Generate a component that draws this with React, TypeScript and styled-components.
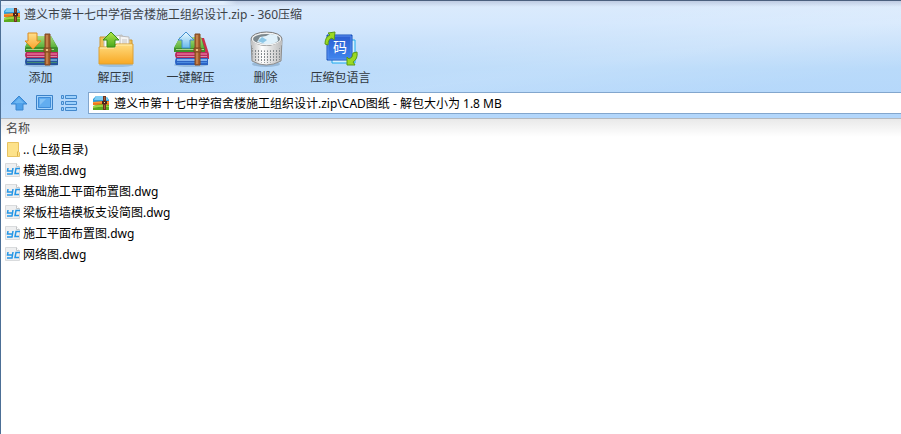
import React from "react";
import styled, { createGlobalStyle } from "styled-components";

const Global = createGlobalStyle`
  * { box-sizing: border-box; }
  body { margin: 0; background: #fff; }
  body, button, input, table {
    font-family: "Noto Sans", "Noto Sans CJK SC", sans-serif;
    font-size: 12px;
    line-height: 18px;
    color: #000;
  }
  svg { display: block; flex: none; }
`;

const Window = styled.div`
  min-height: 100vh;
  border-left: 1px solid #4c6f96;
  background: #fff;
  overflow: hidden;
`;

const Header = styled.header`
  border-top: 1px solid #4b607e;
  border-bottom: 1px solid #b4b9bf;
  background:
    linear-gradient(90deg, rgba(226, 238, 252, 1) 222px, rgba(226, 238, 252, 0) 236px) left top / 100% 4px no-repeat,
    linear-gradient(rgba(170, 182, 208, 0.6), rgba(190, 208, 235, 0)) left top / 100% 6px no-repeat,
    linear-gradient(172deg, rgba(255, 255, 255, 0) 40%, rgba(255, 255, 255, 0.12) 60%, rgba(255, 255, 255, 0) 80%),
    linear-gradient(#dcebfc 0, #d5e8fd 22px, #c8e1fb 44px, #b9dafa 68px, #b2d6fb 100%);
`;

const TitleBar = styled.div`
  display: flex;
  align-items: center;
  gap: 3px;
  height: 26px;
  padding: 1px 0 0 3px;
`;

const Title = styled.h1`
  margin: 0;
  font-size: 12px;
  font-weight: 400;
  color: #3c4248;
`;

const Toolbar = styled.nav`
  display: flex;
  height: 62px;
  padding-left: 2px;
`;

const ToolButton = styled.button`
  display: flex;
  flex-direction: column;
  align-items: center;
  width: 75px;
  padding: 2px 0 0;
  border: 0;
  background: none;
  color: #303840;
`;

const AddressRow = styled.div`
  display: flex;
  align-items: center;
  padding: 3px 0 4px 9px;
`;

const NavButton = styled.button`
  width: 25px;
  padding: 0;
  border: 0;
  background: none;
`;

const AddressBox = styled.label`
  display: flex;
  flex: 1;
  align-items: center;
  gap: 3px;
  height: 22px;
  margin-left: 3px;
  padding-left: 4px;
  border: 1px solid #82a6cd;
  border-right: 0;
  background: #fff;
`;

const AddressInput = styled.input`
  flex: 1;
  min-width: 0;
  padding: 2px 0 0 1px;
  border: 0;
  outline: 0;
  background: none;
`;

const FileArea = styled.main`
  background: linear-gradient(#e9e9e9, #fff 18px);
`;

const FileTable = styled.table`
  width: 100%;
  border-collapse: collapse;
`;

const NameHeading = styled.th`
  height: 20px;
  padding: 0 0 0 5px;
  font-weight: 400;
  text-align: left;
  color: #484848;
`;

const NameCell = styled.td`
  height: 21px;
  padding: 0 0 0 4px;
`;

const FileName = styled.div`
  display: flex;
  align-items: center;
  gap: 2px;
`;

function ArchiveIcon() {
  return (
    <svg width="17" height="16" viewBox="0 0 17 16" aria-hidden="true">
      <path d="M3 1h6l1 1h4l2 3v2H0V4z" fill="#2f9fdd" />
      <path d="M3 1h6l1 1h4l1 3H1z" fill="#7fcdf3" />
      <path d="M0 7l10-1h6v4H0z" fill="#f27a1c" />
      <path d="M0 7h16v1H0z" fill="#fb9c38" />
      <path d="M0 11q7-3 16-1v5H0z" fill="#5cab1e" />
      <path d="M0 11q7-2 16 0v1q-8-1-16 1z" fill="#a2d645" />
      <path d="M10 1h3v14h-3z" fill="#6e3520" />
      <path d="M9 6h5v3H9z" fill="#4a251c" />
      <path d="M11 2h1v3h-1zM11 10h1v4h-1z" fill="#a85e38" />
      <path d="M11 7h1v1h-1z" fill="#f9d779" />
    </svg>
  );
}

function Books({ lifted }: { lifted?: boolean }) {
  return (
    <>
      <path d="M5 29h32v7H5q-2-3 0-7z" fill={lifted ? "#2a63c4" : "#27539b"} />
      <path d="M6 30h30v2H6z" fill={lifted ? "#7fb0ee" : "#6d9bd0"} />
      <path d="M6 33h30v1H6z" fill={lifted ? "#4a8be0" : "#3f8a76"} />
      <path d="M5 23h32v6H5q-2-3 0-6z" fill="#b52c5d" />
      <path d="M6 24h30v2H6z" fill="#dc5b88" />
      <path d="M6 27h30v1H6z" fill="#d88ba8" />
      <path d={lifted ? "M9 8h21l4 12v3H3v-4z" : "M9 7h21l7 12v4H4v-4z"} fill="#3f8f2b" />
      <path d={lifted ? "M9 8h21l3 11H3z" : "M9 7h21l6 11H4z"} fill="url(#cover)" />
      <path d="M5 20h28v1H5z" fill="#a9d58a" />
    </>
  );
}

function Strap() {
  return (
    <>
      <path d="M24 5h5v31h-5z" fill="#a9602c" stroke="#804a22" />
      <path d="M26 6v29" stroke="#dda068" />
      <path d="M23 19h7v4h-7z" fill="#a0602e" stroke="#7c4820" />
      <path d="M26 20v2" stroke="#f0bf82" strokeWidth="2" />
    </>
  );
}

function AddIcon() {
  return (
    <svg width="40" height="40" viewBox="0 0 40 40" aria-hidden="true">
      <defs>
        <linearGradient id="cover" x2="0" y2="1"><stop stopColor="#a9db7c" /><stop offset="1" stopColor="#5cb13b" /></linearGradient>
        <linearGradient id="orange" x2="0" y2="1"><stop stopColor="#ffe08c" /><stop offset="1" stopColor="#f8a42c" /></linearGradient>
      </defs>
      <ellipse cx="20" cy="36" rx="17" ry="2" fill="#5481a7" opacity=".35" />
      <Books /><Strap />
      <path d="M7 4h9v8h4l-8 8-8-8h3z" fill="url(#orange)" stroke="#dc8a1f" />
    </svg>
  );
}

function ExtractIcon() {
  return (
    <svg width="40" height="40" viewBox="0 0 40 40" aria-hidden="true">
      <defs>
        <linearGradient id="folder" x2="0" y2="1"><stop stopColor="#ffdc80" /><stop offset="1" stopColor="#f8a823" /></linearGradient>
        <linearGradient id="lime" x2="0" y2="1"><stop stopColor="#b5e848" /><stop offset="1" stopColor="#48a81e" /></linearGradient>
      </defs>
      <ellipse cx="20" cy="36" rx="17" ry="2" fill="#5481a7" opacity=".3" />
      <path d="M4 8h10l2 3h20v14H4z" fill="#efbf58" stroke="#cd9531" />
      <path d="M8 9l18-3 3 16H8z" fill="#fafafa" stroke="#b8b8b6" />
      <path d="M24 7l9 1v14h-9z" fill="#f4f4f4" stroke="#bbb" />
      <path d="M26 11h5M26 13h5M26 15h5" stroke="#c4c4c4" />
      <path d="M3 18h14l3-3h17v20H3z" fill="url(#folder)" stroke="#dba036" />
      <path d="M4 19h14l3-3h15" fill="none" stroke="#fff0b4" />
      <path d="M15 3l8 8h-4v7h-8v-7H7z" fill="url(#lime)" stroke="#398d18" />
    </svg>
  );
}

function QuickExtractIcon() {
  return (
    <svg width="40" height="40" viewBox="0 0 40 40" aria-hidden="true">
      <defs><linearGradient id="blue" x2="0" y2="1"><stop stopColor="#eefaff" /><stop offset="1" stopColor="#65b9ed" /></linearGradient></defs>
      <ellipse cx="20" cy="36" rx="17" ry="2" fill="#5481a7" opacity=".35" />
      <path d="M29 9h4l5 16v5h-6z" fill="#c8304a" />
      <Books lifted /><Strap />
      <path d="M15 3l8 8h-4v8h-8v-8H7z" fill="url(#blue)" stroke="#438fce" />
    </svg>
  );
}

function TrashIcon() {
  return (
    <svg width="40" height="40" viewBox="0 0 40 40" aria-hidden="true">
      <defs>
        <linearGradient id="basket"><stop stopColor="#bbb" /><stop offset=".35" stopColor="#fff" /><stop offset="1" stopColor="#bcbcbc" /></linearGradient>
        <pattern id="mesh" width="3" height="3" patternUnits="userSpaceOnUse"><path d="M0 0h1v2H0z" fill="#858b8e" /></pattern>
      </defs>
      <ellipse cx="20" cy="35" rx="14" ry="3" fill="#6587a5" opacity=".4" />
      <path d="M5 11l1 21q14 8 29 0l1-21z" fill="url(#basket)" stroke="#8d8d8d" />
      <path d="M6 19q14 5 29 0l-1 12q-13 6-27 0z" fill="url(#mesh)" />
      <ellipse cx="20.5" cy="10" rx="15.5" ry="7" fill="#f1f1f1" stroke="#777" />
      <ellipse cx="20.5" cy="10" rx="13.5" ry="5" fill="#7c888e" />
      <path d="M11 13l3-5 6-1 4-2 7 1 1 6q-8 6-21 1z" fill="#e0f1fb" />
      <path d="M12 12l4-4 5 3-4 3z" fill="#8bc6e6" />
      <path d="M5 11q15 12 31 0v5q-15 9-31 0z" fill="url(#basket)" />
    </svg>
  );
}

const CodeMark = styled.text`
  font-family: "Noto Sans CJK SC", sans-serif;
  font-size: 14px;
  fill: #fff;
`;

function LanguageIcon() {
  return (
    <svg width="40" height="40" viewBox="0 0 40 40" aria-hidden="true">
      <defs><linearGradient id="tile" x2="0" y2="1"><stop stopColor="#2b5cd0" /><stop offset="1" stopColor="#3f86ee" /></linearGradient></defs>
      <path d="M11 11h23v23H11z" fill="#d4f1ff" stroke="#1ca9ee" />
      <path d="M6 6h25v25H6z" fill="url(#tile)" stroke="#1750ba" />
      <path d="M7 7h23v23H7z" fill="none" stroke="#5a8fee" />
      <CodeMark x="12" y="23">码</CodeMark>
      <path d="M4 15q0-7 5-9L7 4l7-1-1 8-2-2q-4 1-4 7z" fill="#9bd921" stroke="#5a9a16" />
      <path d="M36 23q1 7-4 10l2 3h-8v-8l2 2q4-1 4-6z" fill="#9bd921" stroke="#5a9a16" />
    </svg>
  );
}

function UpIcon() {
  return (
    <svg width="18" height="18" viewBox="0 0 18 18" aria-hidden="true">
      <path d="M9 2l8 8h-4v6H6v-6H1z" fill="#4fa1ea" stroke="#3b86d0" strokeLinejoin="round" />
      <path d="M9 4l5 5H4z" fill="#6cb6f2" />
    </svg>
  );
}

function PreviewIcon() {
  return (
    <svg width="18" height="18" viewBox="0 0 18 18" aria-hidden="true">
      <path d="M1.500 1.500h16v14h-16z" fill="#a5d3fc" stroke="#3c82c8" />
      <path d="M3.500 3.500h12v10h-12z" fill="#62adf0" stroke="#3f8cd8" />
      <path d="M5 5h6L5 11z" fill="#84c2f6" />
    </svg>
  );
}

function ListIcon() {
  return (
    <svg width="18" height="18" viewBox="0 0 18 18" aria-hidden="true">
      <g fill="#9bd0fc" stroke="#4288cc">
        <path d="M1.500 1.500h2v3h-2zM1.500 7.500h2v3h-2zM1.500 13.500h2v3h-2zM5.500 1.500h11v3h-11zM5.500 7.500h11v3h-11zM5.500 13.500h11v3h-11z" />
      </g>
    </svg>
  );
}

function FolderIcon() {
  return (
    <svg width="16" height="17" viewBox="0 0 16 17" aria-hidden="true">
      <path d="M2.500 1.500h11v9l1 1v4h-12z" fill="#fde28a" stroke="#e8c361" />
      <path d="M12.500 15v-4l1-1" fill="none" stroke="#dcb34b" />
    </svg>
  );
}

function DrawingIcon() {
  return (
    <svg width="16" height="17" viewBox="0 0 16 17" aria-hidden="true">
      <path d="M.5 1.500h11l3 3v10H.5z" fill="#eeeff0" stroke="#d9dbdd" />
      <path d="M11.500 1.500v3h3" fill="#fff" stroke="#c4c7c9" />
      <path d="M3 6l-.5 3h5M8 6l-1 6H2M15 6.500h-4l-1 5h4" fill="none" stroke="#2496e6" strokeWidth="1.500" />
    </svg>
  );
}

const tools = [
  { label: "添加", Icon: AddIcon },
  { label: "解压到", Icon: ExtractIcon },
  { label: "一键解压", Icon: QuickExtractIcon },
  { label: "删除", Icon: TrashIcon },
  { label: "压缩包语言", Icon: LanguageIcon },
];

const files = [
  "横道图.dwg",
  "基础施工平面布置图.dwg",
  "梁板柱墙模板支设简图.dwg",
  "施工平面布置图.dwg",
  "网络图.dwg",
];

export default function App() {
  return (
    <>
      <Global />
      <Window>
        <Header>
          <TitleBar>
            <ArchiveIcon />
            <Title>遵义市第十七中学宿舍楼施工组织设计.zip - 360压缩</Title>
          </TitleBar>
          <Toolbar>
            {tools.map(({ label, Icon }) => (
              <ToolButton key={label} type="button"><Icon />{label}</ToolButton>
            ))}
          </Toolbar>
          <AddressRow>
            <NavButton type="button" aria-label="向上"><UpIcon /></NavButton>
            <NavButton type="button" aria-label="预览"><PreviewIcon /></NavButton>
            <NavButton type="button" aria-label="列表"><ListIcon /></NavButton>
            <AddressBox>
              <ArchiveIcon />
              <AddressInput aria-label="路径" defaultValue={"遵义市第十七中学宿舍楼施工组织设计.zip\\CAD图纸 - 解包大小为 1.8 MB"} />
            </AddressBox>
          </AddressRow>
        </Header>
        <FileArea>
          <FileTable>
            <thead><tr><NameHeading scope="col">名称</NameHeading></tr></thead>
            <tbody>
              <tr><NameCell><FileName><FolderIcon />.. (上级目录)</FileName></NameCell></tr>
              {files.map((name) => (
                <tr key={name}><NameCell><FileName><DrawingIcon />{name}</FileName></NameCell></tr>
              ))}
            </tbody>
          </FileTable>
        </FileArea>
      </Window>
    </>
  );
}
